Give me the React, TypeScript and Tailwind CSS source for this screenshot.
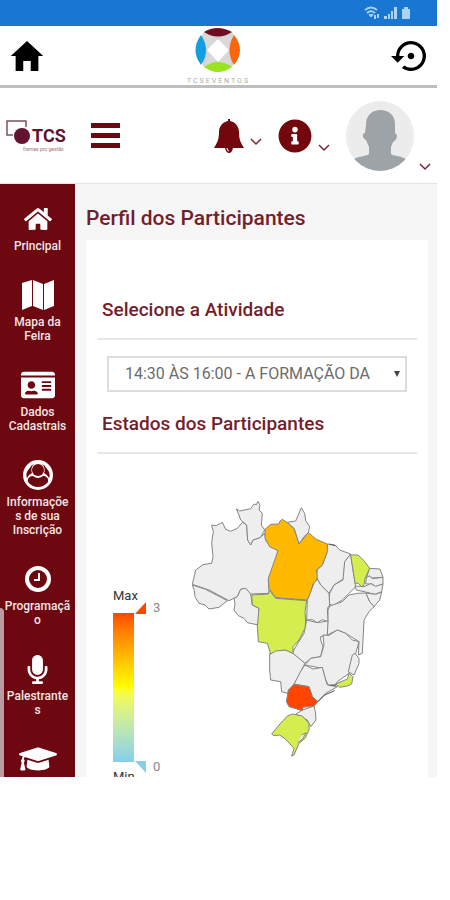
import type { ReactNode } from "react";
import { FaGraduationCap, FaHome, FaIdCard, FaInfoCircle, FaMicrophone } from "react-icons/fa";
import { IoMdHome } from "react-icons/io";
import { MdSettingsBackupRestore } from "react-icons/md";

const fontStack = "font-['Roboto','Liberation_Sans',sans-serif]";

function StatusBar() {
  return (
    <div className="flex h-[26px] items-center justify-end gap-[3px] bg-[#1976d2] pr-[26px] text-[#a9d3f7]">
      <svg width="18" height="16" viewBox="0 0 18 16" fill="none" stroke="currentColor" aria-hidden="true">
        <path d="M2 5Q8 0 14 5M4 8Q8 4.500 12 8" strokeWidth="1.800" />
        <path d="M6 9.500L8 12L10 9.500Z" fill="currentColor" />
        <path d="M12 10v4M15 9v4" strokeWidth="2" />
      </svg>
      <svg width="14" height="14" viewBox="0 0 14 14" fill="currentColor" aria-hidden="true">
        <path d="M0 10h3v3H0zM4 8h2v5H4zM7 5h2v8H7zM10 1h3v12h-3z" />
      </svg>
      <svg width="10" height="14" viewBox="0 0 10 14" fill="currentColor" aria-hidden="true">
        <path d="M3 1h4v2h2v10H1V3h2z" />
      </svg>
    </div>
  );
}

function EventLogo() {
  return (
    <div className="flex flex-col items-center">
      <svg width="46" height="46" viewBox="0 0 46 46" aria-hidden="true">
        <path d="M9 5L23 1L37 5L44 23L37 40L23 45L9 40L2 23Z" fill="#d0d0d0" />
        <path d="M9 5L23 12L13 23L5 12ZM37 5L23 12L33 23L41 12ZM9 40L23 36L13 23ZM37 40L23 36L33 23Z" fill="#d8d8d8" />
        <path d="M9 5Q22 -3 37 5Q23 14 9 5Z" fill="#6f0d24" />
        <path d="M6 8Q-5 23 6 38Q16 23 6 8Z" fill="#139ee0" />
        <path d="M39 8Q51 23 39 38Q30 23 39 8Z" fill="#f9660b" />
        <path d="M9 40Q23 50 37 40Q23 30 9 40Z" fill="#98e51d" />
        <path d="M23 12L34 23L23 35L12 23Z" fill="white" />
      </svg>
      <span className="mt-1 text-[7px] leading-2 tracking-[2px] text-[#aaaaaa]">TCSEVENTOS</span>
    </div>
  );
}

function AppBar() {
  return (
    <header className="grid h-[62px] grid-cols-3 items-center border-b-[3px] border-[#bebebe] bg-white">
      <button type="button" aria-label="Início" className="ml-[7px] justify-self-start text-black">
        <IoMdHome size={40} />
      </button>
      <div className="justify-self-center">
        <EventLogo />
      </div>
      <button type="button" aria-label="Recarregar" className="mr-[6px] justify-self-end text-black">
        <MdSettingsBackupRestore size={40} />
      </button>
    </header>
  );
}

function TcsLogo() {
  return (
    <svg width="64" height="38" viewBox="0 0 64 38" role="img" aria-label="TCS" className={fontStack}>
      <path d="M7 18H1V4H20V10" fill="none" stroke="#795061" strokeWidth="1.500" />
      <circle cx="16" cy="19" r="8" fill="#611331" />
      <text x="26" y="25" fontSize="18" fontWeight="700" fill="#611331">TCS</text>
      <text x="17" y="34" fontSize="5" fill="#a5707f">frames pro gestão</text>
    </svg>
  );
}

function Chevron() {
  return (
    <svg width="12" height="8" viewBox="0 0 12 8" fill="none" stroke="#792536" strokeWidth="1.500" aria-hidden="true">
      <path d="M1 1L6 6L11 1" />
    </svg>
  );
}

function Toolbar() {
  return (
    <div className="flex h-24 items-center border-b border-[#e2e2e2] bg-white pr-[6px] pl-[6px]">
      <TcsLogo />
      <button type="button" aria-label="Menu" className="ml-[21px] flex w-[29px] flex-col gap-[5px]">
        <span className="h-[5px] w-full bg-[#6a0910]" />
        <span className="h-[5px] w-full bg-[#6a0910]" />
        <span className="h-[5px] w-full bg-[#6a0910]" />
      </button>
      <button type="button" aria-label="Notificações" className="ml-auto flex items-center gap-[5px]">
        <svg width="32" height="36" viewBox="0 0 32 36" fill="#72070e" aria-hidden="true">
          <path d="M15 3V1h2v2C22 4 26 8 26 14C26 22 28 25 31 30H1C4 25 6 22 6 14C6 8 10 4 15 3Z" />
          <path d="M12 30Q13 35 16 35Q19 35 20 30Z" />
          <path d="M14 30Q14 33 16 33" fill="none" stroke="white" />
        </svg>
        <span className="pt-3"><Chevron /></span>
      </button>
      <button type="button" aria-label="Informações" className="ml-4 flex items-center gap-[6px]">
        <FaInfoCircle size={34} color="#72070e" />
        <span className="pt-6"><Chevron /></span>
      </button>
      <button type="button" aria-label="Perfil" className="ml-4 flex items-end gap-[5px]">
        <svg width="68" height="70" viewBox="0 0 68 70" aria-hidden="true">
          <defs>
            <clipPath id="avatar"><ellipse cx="34" cy="35" rx="34" ry="35" /></clipPath>
          </defs>
          <g clipPath="url(#avatar)">
            <path d="M0 0H68V70H0Z" fill="#ececec" />
            <path d="M20 24C19 4 50 4 49 24V32C53 34 50 40 47 41L45 46V53C47 55 57 55 61 59V70H8V58C13 55 21 55 23 53V46L20 39C16 37 16 32 19 32Z" fill="#9da3a6" />
          </g>
        </svg>
        <span><Chevron /></span>
      </button>
    </div>
  );
}

const MapIcon = (
  <svg width="32" height="30" viewBox="0 0 32 30" fill="white" aria-hidden="true">
    <path d="M0 3L10 0V26L0 30ZM11 0L21 4V30L11 26ZM22 4L32 0V26L22 30Z" />
  </svg>
);

const UserIcon = (
  <svg width="32" height="32" viewBox="0 0 32 32" aria-hidden="true">
    <circle cx="16" cy="16" r="15" fill="white" />
    <circle cx="16" cy="11" r="6" fill="#6d0810" />
    <path d="M6 23C5 18 9 17 11 17Q16 21 21 17C23 17 27 18 26 23Q22 28 16 28Q10 28 6 23Z" fill="#6d0810" />
    <path d="M7 10Q9 6 12 5Q8 9 10 14Q6 16 5 19Q3 14 7 10ZM25 10Q23 6 20 5Q24 9 22 14Q26 16 27 19Q29 14 25 10Z" fill="#6d0810" />
  </svg>
);

const ClockIcon = (
  <svg width="28" height="28" viewBox="0 0 28 28" fill="none" stroke="white" aria-hidden="true">
    <circle cx="14" cy="14" r="11" strokeWidth="4" />
    <path d="M15 8V15H10" strokeWidth="2" />
  </svg>
);

const menu: { name: string; label?: string; icon: ReactNode }[] = [
  { name: "Principal", label: "Principal", icon: <FaHome size={28} /> },
  { name: "Mapa da Feira", label: "Mapa da Feira", icon: MapIcon },
  { name: "Dados Cadastrais", label: "Dados Cadastrais", icon: <FaIdCard size={34} /> },
  { name: "Informações de sua Inscrição", label: "Informações de sua Inscrição", icon: UserIcon },
  { name: "Programação", label: "Programação", icon: ClockIcon },
  { name: "Palestrantes", label: "Palestrantes", icon: <FaMicrophone size={29} /> },
  { name: "Certificados", icon: <FaGraduationCap size={38} /> },
];

function Sidebar() {
  return (
    <nav className="relative w-[75px] shrink-0 overflow-hidden bg-[#6d0810] pt-[19px]">
      <ul className="flex flex-col items-center gap-[26px]">
        {menu.map((item) => (
          <li key={item.name}>
            <a
              href="#"
              aria-label={item.name}
              className="flex w-[66px] flex-col items-center gap-1 text-center text-xs leading-[14px] font-medium text-[#f3e5e6]"
            >
              <span className="flex h-8 items-center text-white">{item.icon}</span>
              {item.label && <span className="w-full wrap-break-word">{item.label}</span>}
            </a>
          </li>
        ))}
      </ul>
      <span className="absolute bottom-0 left-0 h-[169px] w-1 rounded-tr bg-[#b99da2]" />
    </nav>
  );
}

const states: [string, string][] = [
  ["#eeeeee", "98,105 112,107 130,97 140,118 155,124 175,115 190,97 203,105 206,150 215,165 222,150 245,142 257,130 262,155 297,182 290,215 268,270 270,310 215,312 200,295 185,298 175,320 150,332 90,300 40,283 50,240 72,224 98,220 102,200 98,158 103,125"],
  ["#eeeeee", "40,285 80,298 145,332 120,352 90,357 78,345 60,340 48,320 46,302"],
  ["#eeeeee", "165,325 175,320 185,298 200,295 215,312 220,345 240,355 238,405 205,398 195,385 178,377 165,360 168,342"],
  ["#eeeeee", "172,57 182,63 215,56 225,42 232,44 237,34 243,45 240,60 250,70 247,105 257,120 245,142 222,150 215,165 206,150 203,105 185,90 180,75"],
  ["#eeeeee", "325,97 350,93 360,70 367,53 377,70 380,92 392,110 388,128 375,140 360,162 345,115"],
  ["#eeeeee", "445,162 468,165 482,180 515,192 497,215 495,265 465,285 450,310 425,285 412,260 415,240 430,225 443,190"],
  ["#eeeeee", "515,192 522,240 530,290 510,310 490,330 460,348 450,340 452,310 465,285 492,270 497,215"],
  ["#eeeeee", "572,235 603,237 612,262 580,264 572,258 562,265"],
  ["#eeeeee", "562,262 572,258 580,266 612,262 612,282 590,290 580,282 560,282"],
  ["#eeeeee", "528,288 555,290 575,281 590,289 612,282 608,305 588,313 560,306 532,300"],
  ["#eeeeee", "560,309 590,313 608,306 602,330 585,350 572,335"],
  ["#eeeeee", "452,348 490,335 510,315 535,310 560,309 572,335 585,350 570,365 555,390 550,490 538,495 540,455 500,430 475,420 445,435 447,360"],
  ["#eeeeee", "385,330 412,262 425,285 450,310 452,345 445,355 447,395 430,389 415,398 400,389 383,390"],
  ["#eeeeee", "383,390 415,398 447,393 445,435 425,440 425,450 432,470 425,500 395,505 378,520 340,490 350,470 375,430"],
  ["#eeeeee", "432,435 450,436 475,420 500,430 520,450 540,455 530,490 520,500 510,550 475,575 470,585 450,588 440,570 430,535 378,525 395,505 425,500 435,465"],
  ["#eeeeee", "520,495 528,490 540,505 540,520 525,555 508,545"],
  ["#eeeeee", "378,525 402,537 430,532 440,570 445,585 475,590 440,610 415,635 400,620 390,590 345,582 360,550"],
  ["#eeeeee", "272,490 285,480 320,480 342,490 378,520 345,582 325,610 308,605 305,575 275,570 272,540"],
  ["#eeeeee", "370,660 405,648 409,665 411,690 395,710 385,690 350,673"],
  ["#ffb900", "258,118 275,103 300,102 303,93 310,88 325,98 335,108 345,115 360,162 388,128 412,148 445,162 445,185 430,225 412,240 415,258 412,272 403,280 395,305 385,330 290,323 270,295 268,265 297,182 272,170 258,145"],
  ["#d6ed50", "218,315 268,312 272,302 290,325 383,332 378,365 380,395 378,415 360,450 342,470 342,490 320,480 290,483 275,492 265,460 238,455 235,410 240,355 220,345"],
  ["#d6ed50", "515,195 537,195 555,212 572,235 558,265 555,285 547,290 538,280 528,280 522,240"],
  ["#d6ed50", "470,582 505,567 510,550 522,560 518,582 505,588 482,592"],
  ["#ff4500", "345,583 390,590 400,620 417,635 405,648 372,652 370,662 330,650 322,635 328,600"],
  ["#d6ed50", "278,732 300,705 325,678 340,672 370,678 390,700 390,720 378,745 360,760 345,795 338,798 345,775 320,748 302,735 285,737"],
];

function BrazilMap() {
  return (
    <svg
      viewBox="0 0 660 840"
      className="w-[220px] shrink-0"
      stroke="#858585"
      strokeWidth="3"
      strokeLinejoin="round"
      role="img"
      aria-label="Mapa dos estados do Brasil"
    >
      {states.map(([fill, points]) => (
        <polygon key={points} fill={fill} points={points} />
      ))}
      <path d="M368 735L382 728L370 748L356 758" fill="#eeeeee" />
      <path d="M450 162l18 5M452 585h20M417 635l20-20 30-13" fill="none" stroke="#555555" />
    </svg>
  );
}

function Legend() {
  return (
    <div className="mt-[99px] w-[54px] shrink-0 text-[13px] leading-[14px] text-[#333333]">
      <div>Max</div>
      <div className="mt-[10px] flex gap-px">
        <div className="h-[149px] w-[21px] bg-linear-to-b from-[#ff4500] via-[#ffff00] to-[#87ceeb]" />
        <div className="-my-3 flex flex-col justify-between text-[#888888]">
          <span className="flex items-center gap-[7px]">
            <svg width="11" height="12" viewBox="0 0 11 12" aria-hidden="true"><path d="M0 12L11 0V12Z" fill="#ff4500" /></svg>
            3
          </span>
          <span className="flex items-center gap-[7px]">
            <svg width="11" height="12" viewBox="0 0 11 12" aria-hidden="true"><path d="M0 0H11V12Z" fill="#87ceeb" /></svg>
            0
          </span>
        </div>
      </div>
      <div className="mt-2">Min</div>
    </div>
  );
}

const sectionTitle = "border-b-2 border-[#e8e8eb] px-[5px] pb-[14px] text-[19px] leading-7 font-medium text-[#751d2b]";

function Profile() {
  return (
    <main className="min-w-0 flex-1 bg-[#f6f6f6] pr-[9px] pl-[11px]">
      <h1 className="pt-5 text-[21px] leading-7 font-medium text-[#751d2b]">Perfil dos Participantes</h1>
      <section className="mt-2 h-full bg-white px-[11px] pt-14">
        <h2 className={sectionTitle}>
          <label htmlFor="atividade">Selecione a Atividade</label>
        </h2>
        <div className="relative mx-[10px] mt-4">
          <select
            id="atividade"
            className="h-9 w-full appearance-none border-2 border-[#dcdcdc] bg-white pr-5 pl-4 text-base text-[#6c6c6c]"
          >
            <option>14:30 ÀS 16:00 - A FORMAÇÃO DA</option>
          </select>
          <svg width="6" height="6" viewBox="0 0 6 6" className="pointer-events-none absolute top-[15px] right-[7px]" aria-hidden="true">
            <path d="M0 0H6L3 6Z" fill="#444444" />
          </svg>
        </div>
        <div className="pt-[18px]">
          <h2 className={sectionTitle}>Estados dos Participantes</h2>
        </div>
        <div className="mt-9 flex items-start gap-3 pl-4">
          <Legend />
          <BrazilMap />
        </div>
      </section>
    </main>
  );
}

export default function App() {
  return (
    <div className={`min-h-screen bg-white pr-[13px] ${fontStack}`}>
      <StatusBar />
      <AppBar />
      <Toolbar />
      <div className="flex h-[593px] overflow-hidden">
        <Sidebar />
        <Profile />
      </div>
    </div>
  );
}
